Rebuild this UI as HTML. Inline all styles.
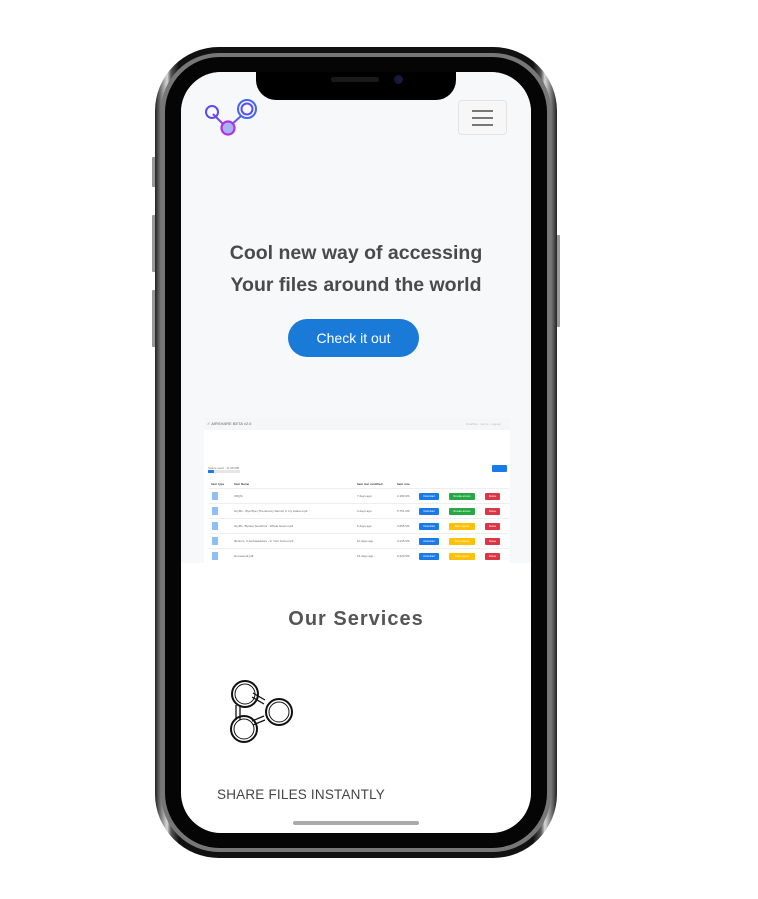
<!DOCTYPE html>
<html><head><meta charset="utf-8">
<style>
*{margin:0;padding:0;box-sizing:border-box}
body{width:758px;height:899px;background:#fff;position:relative;overflow:hidden;font-family:"Liberation Sans",sans-serif}
.abs{position:absolute}
.phone{left:155px;top:47px;width:402px;height:811px;border-radius:64px;background:linear-gradient(90deg,#222 0,#9a9a9a 2%,#d8d8d8 3%,#555 4%,#111 6%,#111 94%,#555 96%,#d8d8d8 97%,#9a9a9a 98%,#222 100%);}
.phone2{left:161px;top:53px;width:390px;height:799px;border-radius:58px;background:#777;}
.phone3{left:165px;top:57px;width:382px;height:791px;border-radius:55px;background:#050505;}
.screen{left:181px;top:72px;width:350px;height:761px;border-radius:40px;background:#fff;overflow:hidden}
.btn{background:#999;border-radius:1px}
.t{font-weight:bold;color:#4a4a4a;font-size:19.5px;text-align:center;width:350px;left:0}
.row{position:absolute;left:5px;width:300px;height:15px;border-top:1px solid #eee;font-size:3px;color:#666}
.b{position:absolute;height:7px;top:4px;font-size:2.5px;color:#fff;text-align:center;line-height:7px;border-radius:1px}
</style></head><body>
<div class="abs btn" style="left:152px;top:157px;width:4px;height:30px"></div>
<div class="abs btn" style="left:152px;top:215px;width:4px;height:57px"></div>
<div class="abs btn" style="left:152px;top:290px;width:4px;height:57px"></div>
<div class="abs btn" style="left:556px;top:235px;width:4px;height:92px"></div>
<div class="abs phone"></div>
<div class="abs phone2"></div>
<div class="abs phone3"></div>
<div class="abs screen">
  <div class="abs" style="left:0;top:0;width:350px;height:491px;background:#f7f8fa"></div>
  <svg class="abs" style="left:20px;top:24px" width="60" height="44" viewBox="0 0 60 44">
    <defs><linearGradient id="g" x1="0" y1="1" x2="1" y2="0"><stop offset="0" stop-color="#c030e0"/><stop offset="1" stop-color="#3a6cf5"/></linearGradient></defs>
    <line x1="12" y1="18" x2="24" y2="30" stroke="#7b45f0" stroke-width="2"/>
    <line x1="30" y1="29" x2="40" y2="20" stroke="#6a55f0" stroke-width="2"/>
    <circle cx="11" cy="16" r="6" fill="none" stroke="#5b4cf2" stroke-width="2"/>
    <circle cx="27" cy="32" r="6.5" fill="#a8b4f0" stroke="#b030e6" stroke-width="2.2"/>
    <circle cx="46" cy="13" r="9" fill="none" stroke="#3f66f5" stroke-width="2"/>
    <circle cx="46" cy="13" r="5.5" fill="none" stroke="#5a4cf2" stroke-width="2"/>
  </svg>
  <div class="abs" style="left:277px;top:28px;width:49px;height:35px;border:1px solid #e3e3e3;border-radius:4px;background:#f7f7f7"></div>
  <div class="abs" style="left:291px;top:38px;width:21px;height:2px;background:#777"></div>
  <div class="abs" style="left:291px;top:45px;width:21px;height:2px;background:#777"></div>
  <div class="abs" style="left:291px;top:52px;width:21px;height:2px;background:#777"></div>
  <div class="abs" style="left:75px;top:0;width:200px;height:28px;background:#000;border-radius:0 0 20px 20px"></div>
  <div class="abs" style="left:150px;top:5px;width:48px;height:5px;background:#1a1a1a;border-radius:3px"></div>
  <div class="abs" style="left:213px;top:3px;width:9px;height:9px;background:#15193a;border-radius:50%"></div>
  <div class="abs t" style="top:170px">Cool new way of accessing</div>
  <div class="abs t" style="top:202px">Your files around the world</div>
  <div class="abs" style="left:107px;top:247px;width:131px;height:38px;border-radius:19px;background:#1a7ad8;color:#fff;font-size:14px;text-align:center;line-height:38px">Check it out</div>
  <div class="abs" style="left:23px;top:346px;width:306px;height:145px;background:#fff;overflow:hidden">
    <div class="abs" style="left:0;top:0;width:306px;height:12px;background:#f5f6f8"></div>
    <div class="abs" style="left:3px;top:3px;font-size:4px;color:#666">✓ AIRSHARE BETA v2.0</div>
    <div class="abs" style="left:262px;top:4px;font-size:3px;color:#bbb">Overflow · Home · Logout</div>
    <div class="abs" style="left:4px;top:48px;font-size:3px;color:#777">Space used : 11.98 MB</div>
    <div class="abs" style="left:4px;top:52px;width:32px;height:3px;background:#e6e6e6"><div style="width:6px;height:3px;background:#1a7ae8"></div></div>
    <div class="abs" style="left:288px;top:47px;width:15px;height:7px;background:#1a7ae8;border-radius:1px"></div>
    <div class="abs" style="left:7px;top:64px;font-size:3px;font-weight:bold;color:#444">Item type</div>
    <div class="abs" style="left:30px;top:64px;font-size:3px;font-weight:bold;color:#444">Item Name</div>
    <div class="abs" style="left:153px;top:64px;font-size:3px;font-weight:bold;color:#444">Item last modified</div>
    <div class="abs" style="left:193px;top:64px;font-size:3px;font-weight:bold;color:#444">Item size</div>
    <div class="row" style="top:70px"><div class="abs" style="left:3px;top:3px;width:6px;height:8px;background:#8fc0f5"></div><div class="abs" style="left:25px;top:5px">VRQS</div><div class="abs" style="left:148px;top:5px">7 days ago</div><div class="abs" style="left:188px;top:5px">2.180 Mb</div><div class="b" style="left:210px;width:20px;background:#1a7ae8">Download</div><div class="b" style="left:240px;width:26px;background:#28a745">Revoke access</div><div class="b" style="left:276px;width:15px;background:#dc3545">Delete</div></div>
    <div class="row" style="top:85px"><div class="abs" style="left:3px;top:3px;width:6px;height:8px;background:#8fc0f5"></div><div class="abs" style="left:25px;top:5px">Gryffin - Bye Bye (The Enemy Remix) ft. Ivy Adara.mp3</div><div class="abs" style="left:148px;top:5px">3 days ago</div><div class="abs" style="left:188px;top:5px">5.751 Mb</div><div class="b" style="left:210px;width:20px;background:#1a7ae8">Download</div><div class="b" style="left:240px;width:26px;background:#28a745">Revoke access</div><div class="b" style="left:276px;width:15px;background:#dc3545">Delete</div></div>
    <div class="row" style="top:100px"><div class="abs" style="left:3px;top:3px;width:6px;height:8px;background:#8fc0f5"></div><div class="abs" style="left:25px;top:5px">Gryffin, Bipolar Sunshine - Whole Heart.mp3</div><div class="abs" style="left:148px;top:5px">5 days ago</div><div class="abs" style="left:188px;top:5px">3.655 Mb</div><div class="b" style="left:210px;width:20px;background:#1a7ae8">Download</div><div class="b" style="left:240px;width:26px;background:#ffc107">Allow access</div><div class="b" style="left:276px;width:15px;background:#dc3545">Delete</div></div>
    <div class="row" style="top:115px"><div class="abs" style="left:3px;top:3px;width:6px;height:8px;background:#8fc0f5"></div><div class="abs" style="left:25px;top:5px">Illenium, X Ambassadors - In Your Arms.mp3</div><div class="abs" style="left:148px;top:5px">10 days ago</div><div class="abs" style="left:188px;top:5px">3.145 Mb</div><div class="b" style="left:210px;width:20px;background:#1a7ae8">Download</div><div class="b" style="left:240px;width:26px;background:#ffc107">Allow access</div><div class="b" style="left:276px;width:15px;background:#dc3545">Delete</div></div>
    <div class="row" style="top:130px"><div class="abs" style="left:3px;top:3px;width:6px;height:8px;background:#8fc0f5"></div><div class="abs" style="left:25px;top:5px">Homework.pdf</div><div class="abs" style="left:148px;top:5px">15 days ago</div><div class="abs" style="left:188px;top:5px">0.220 Mb</div><div class="b" style="left:210px;width:20px;background:#1a7ae8">Download</div><div class="b" style="left:240px;width:26px;background:#ffc107">Allow access</div><div class="b" style="left:276px;width:15px;background:#dc3545">Delete</div></div>
  </div>
  <div class="abs" style="left:0;top:536px;width:350px;text-align:center;font-size:20px;font-weight:bold;color:#555;letter-spacing:1px">Our Services</div>
  <svg class="abs" style="left:45px;top:605px" width="72" height="70" viewBox="0 0 72 70">
    <g fill="none" stroke="#111">
      <line x1="10" y1="28" x2="10" y2="43" stroke-width="1.3"/><line x1="14" y1="28" x2="14" y2="43" stroke-width="1.3"/>
      <line x1="27" y1="16" x2="39" y2="23" stroke-width="1.3"/><line x1="26" y1="20" x2="38" y2="27" stroke-width="1.3"/>
      <line x1="27" y1="48" x2="39" y2="43" stroke-width="1.3"/><line x1="26" y1="44" x2="38" y2="39" stroke-width="1.3"/>
      <circle cx="19" cy="17" r="13" stroke-width="2"/><circle cx="19" cy="17" r="10" stroke-width="1"/>
      <circle cx="53" cy="35" r="13" stroke-width="2"/><circle cx="53" cy="35" r="10" stroke-width="1"/>
      <circle cx="18" cy="52" r="13" stroke-width="2"/><circle cx="18" cy="52" r="10" stroke-width="1"/>
    </g>
  </svg>
  <div class="abs" style="left:36px;top:715px;font-size:13.5px;color:#444;letter-spacing:0.2px">SHARE FILES INSTANTLY</div>
  <div class="abs" style="left:112px;top:749px;width:126px;height:4px;border-radius:2px;background:#aaa"></div>
</div>
</body></html>
